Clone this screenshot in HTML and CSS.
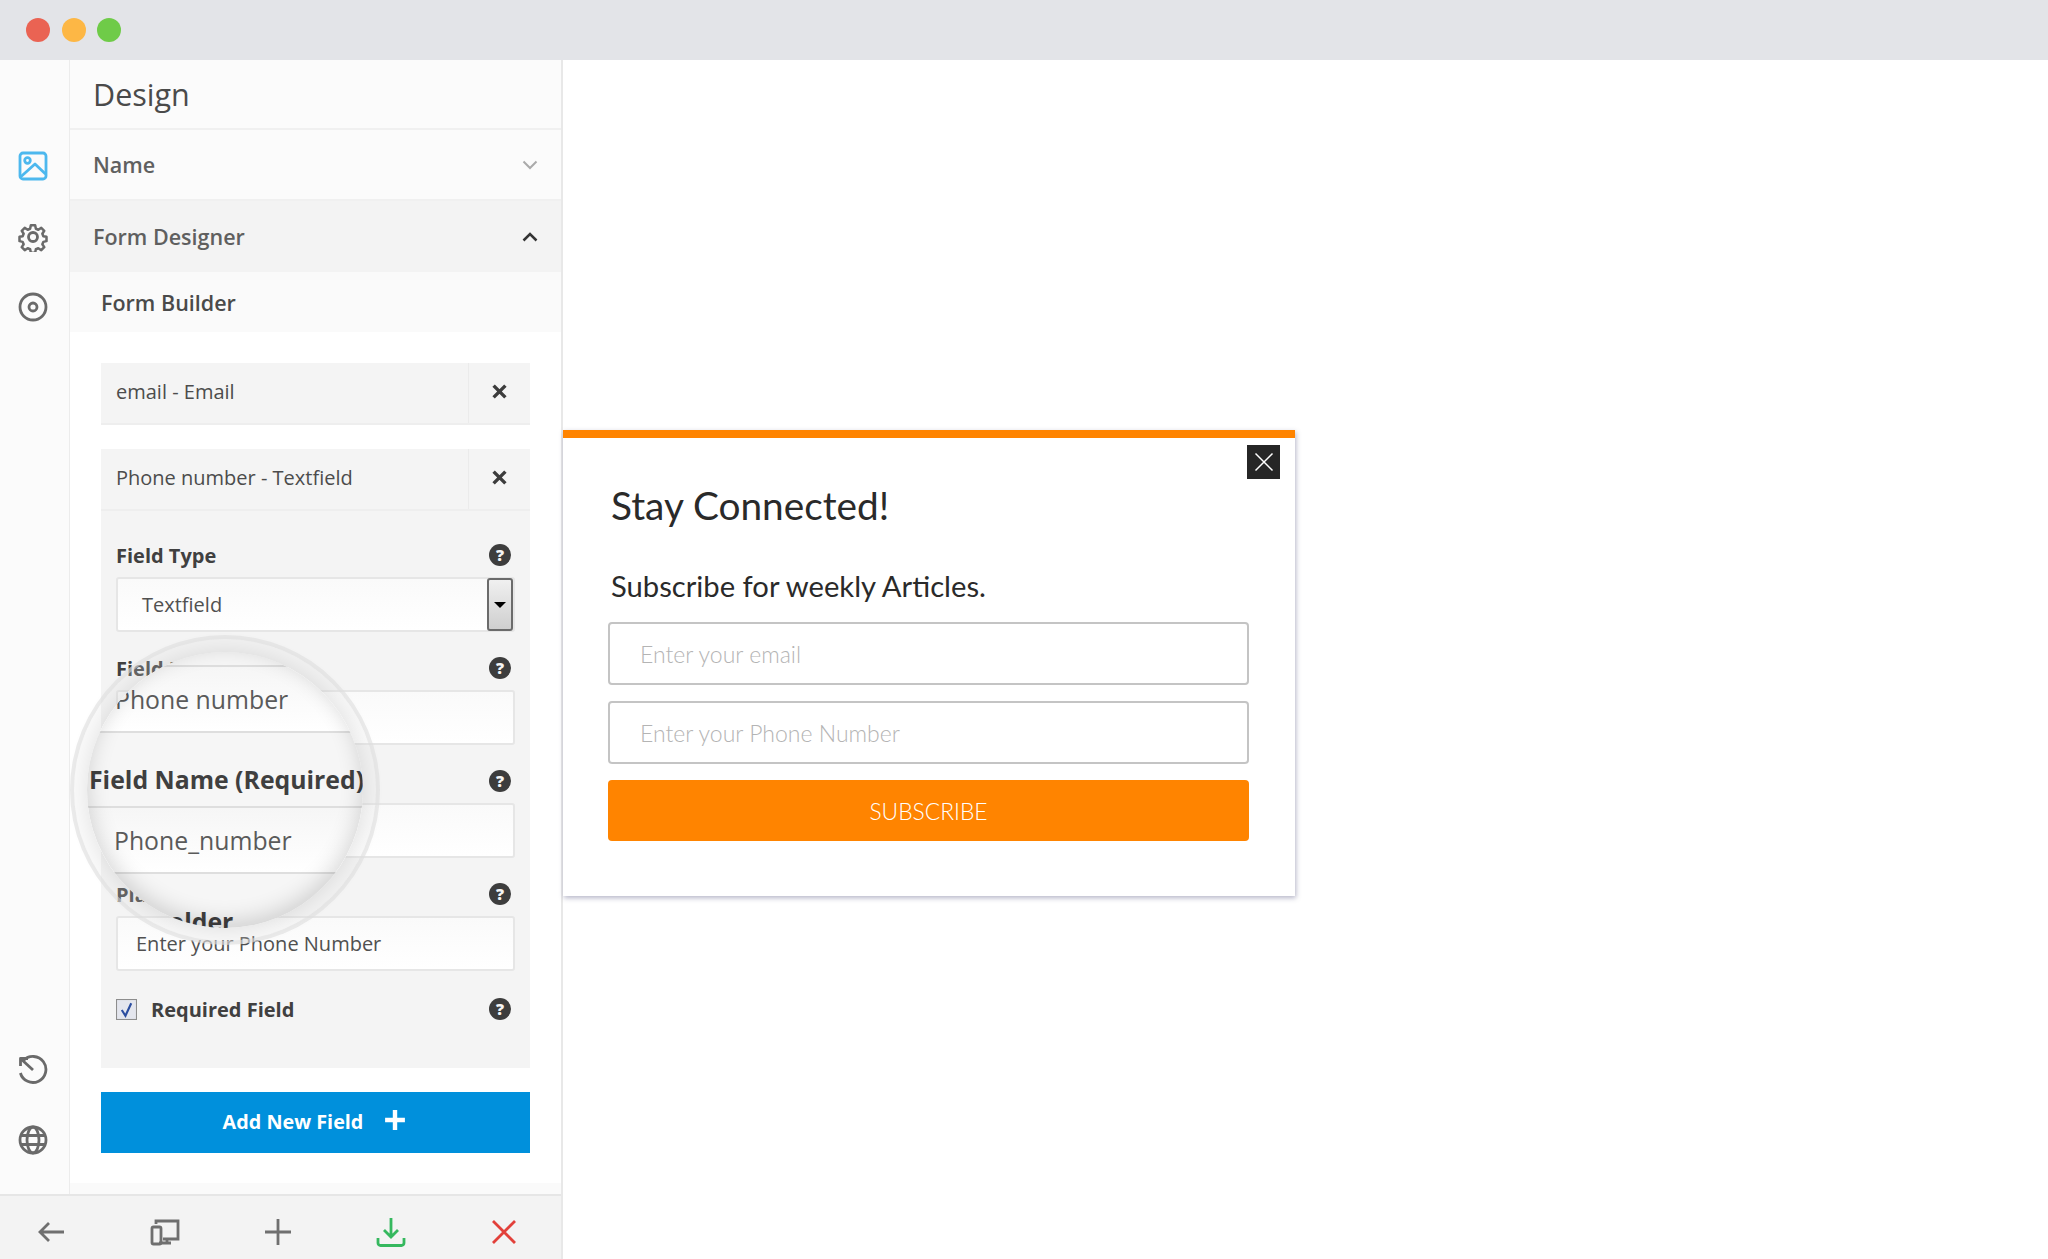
FILE: index.html
```html
<!DOCTYPE html>
<html lang="en">
<head>
<meta charset="utf-8">
<title>Form Designer</title>
<link rel="stylesheet" href="styles.css">
</head>
<body>
<header class="titlebar">
  <span class="dot dot-red"></span>
  <span class="dot dot-yellow"></span>
  <span class="dot dot-green"></span>
</header>
<div class="workspace">
  <aside class="sidebar">
    <div class="sidebar-body">
      <nav class="rail">
        <div class="rail-group">
          <svg class="rail-icon icon-active" viewBox="0 0 30 30"><rect x="2" y="2" width="26" height="26" rx="3"/><circle cx="9.5" cy="9.5" r="2.8"/><path d="M2.5 26 17 13l10.5 10"/></svg>
          <svg class="rail-icon" viewBox="0 0 30 30"><path d="M12.6 2h4.8l.8 3.8 2.7 1.1 3.3-2.1 3.3 3.3-2.1 3.3 1.1 2.7 3.5.7v4.8l-3.5.8-1.1 2.7 2.1 3.2-3.3 3.4-3.3-2.2-2.7 1.1-.8 3.8h-4.8l-.8-3.8-2.7-1.1-3.3 2.2-3.3-3.4 2.1-3.2-1.1-2.7-3.5-.8v-4.8l3.5-.7 1.1-2.7-2.1-3.3 3.3-3.3 3.3 2.1 2.7-1.1z" transform="translate(1.5 1.5) scale(.9)"/><circle cx="15" cy="15" r="4.5"/></svg>
          <svg class="rail-icon" viewBox="0 0 30 30"><circle cx="15" cy="15" r="13"/><circle cx="15" cy="15" r="4"/></svg>
        </div>
        <div class="rail-group">
          <svg class="rail-icon" viewBox="0 0 30 30"><path d="M5.5 5.5A13 13 0 1 1 2.4 18"/><path d="M2.5 11V3.5h7.5"/><path d="M3 4l12 11"/></svg>
          <svg class="rail-icon" viewBox="0 0 30 30"><circle cx="15" cy="15" r="13"/><ellipse cx="15" cy="15" rx="6" ry="13"/><path d="M3 10.500h24M3 19.500h24"/></svg>
        </div>
      </nav>
      <main class="panel">
        <h1 class="panel-title">Design</h1>
        <div class="acc-row">
          <span>Name</span>
          <svg class="chevron chevron-muted" viewBox="0 0 16 10"><path d="M1.500 1.500 8 8l6.500-6.500"/></svg>
        </div>
        <div class="acc-row acc-open">
          <span>Form Designer</span>
          <svg class="chevron" viewBox="0 0 16 10"><path d="M1.500 8.500 8 2l6.500 6.500"/></svg>
        </div>
        <div class="builder-head">Form Builder</div>
        <section class="builder">
          <div class="item">
            <div class="item-head">
              <span class="item-name">email - Email</span>
              <span class="item-x"><svg viewBox="0 0 14 14"><path d="M1.500 1.500l11 11M12.500 1.500l-11 11"/></svg></span>
            </div>
          </div>
          <div class="item">
            <div class="item-head">
              <span class="item-name">Phone number - Textfield</span>
              <span class="item-x"><svg viewBox="0 0 14 14"><path d="M1.500 1.500l11 11M12.500 1.500l-11 11"/></svg></span>
            </div>
            <div class="item-body">
              <div class="label-row label-first"><span>Field Type</span><span class="help">?</span></div>
              <div class="field select"><span>Textfield</span><span class="select-btn"><i class="caret"></i></span></div>
              <div class="label-row"><span>Field Label</span><span class="help">?</span></div>
              <div class="field">Phone number</div>
              <div class="label-row"><span>Field Name (Required)</span><span class="help">?</span></div>
              <div class="field">Phone_number</div>
              <div class="label-row"><span>Placeholder</span><span class="help">?</span></div>
              <div class="field">Enter your Phone Number</div>
              <div class="label-row check-row">
                <span class="check-wrap"><svg class="checkbox" viewBox="0 0 20 20"><rect x=".5" y=".5" width="19" height="19" fill="#e4e6ee" stroke="#8d8d8d"/><path d="M5.500 10.500 9 16l5.500-12" fill="none" stroke="#2b4da0" stroke-width="2"/></svg>Required Field</span>
                <span class="help">?</span>
              </div>
            </div>
          </div>
          <div class="add-btn"><span>Add New Field</span><svg class="add-plus" viewBox="0 0 20 20"><path d="M10 1v18M1 10h18"/></svg></div>
        </section>
      </main>
    </div>
    <footer class="toolbar">
      <svg class="tool" viewBox="0 0 30 30"><path d="M27 15H4M12 6l-9 9 9 9"/></svg>
      <svg class="tool" viewBox="0 0 30 30"><path d="M6 7V4h22v18H13M9 26h12M17 22v4"/><rect x="2" y="10" width="9" height="17" rx="1.500"/></svg>
      <svg class="tool" viewBox="0 0 30 30"><path d="M15 2v26M2 15h26"/></svg>
      <svg class="tool tool-green" viewBox="0 0 30 30"><path d="M15 1v19M8 13l7 7 7-7M2 21v5a2.500 2.500 0 0 0 2.500 2.500h21A2.500 2.500 0 0 0 28 26v-5"/></svg>
      <svg class="tool tool-red" viewBox="0 0 30 30"><path d="M4 4l22 22M26 4 4 26"/></svg>
    </footer>
    <div class="magnifier">
      <div class="lens">
        <div class="lens-field lens-field-a">Phone number</div>
        <div class="lens-label lens-label-name">Field Name (Required)</div>
        <div class="lens-field lens-field-b">Phone_number</div>
        <div class="lens-label lens-label-place">Placeholder</div>
      </div>
    </div>
  </aside>
  <section class="stage">
    <div class="popup">
      <span class="popup-close"><svg viewBox="0 0 20 20"><path d="M1.500 1.500l17 17M18.500 1.500l-17 17"/></svg></span>
      <h2 class="popup-title">Stay Connected!</h2>
      <p class="popup-sub">Subscribe for weekly Articles.</p>
      <div class="popup-input">Enter your email</div>
      <div class="popup-input">Enter your Phone Number</div>
      <div class="popup-btn">SUBSCRIBE</div>
    </div>
  </section>
</div>
</body>
</html>
```
FILE: styles.css
```css
* { box-sizing: border-box; }
html, body { margin: 0; height: 100%; }
body {
  display: flex;
  flex-direction: column;
  width: 2048px;
  height: 1259px;
  overflow: hidden;
  background: #fff;
  font-family: "Open Sans", "Liberation Sans", sans-serif;
  color: #444;
}

/* Window chrome */
.titlebar {
  flex: 0 0 60px;
  display: flex;
  align-items: center;
  gap: 11.500px;
  padding: 0 0 0 26px;
  background: #e3e4e8;
}
.dot { width: 24px; height: 24px; border-radius: 50%; }
.dot-red { background: #ea6353; }
.dot-yellow { background: #fdb745; }
.dot-green { background: #6fcb48; }

.workspace { flex: 1; display: flex; min-height: 0; }

/* Sidebar */
.sidebar {
  position: relative;
  flex: 0 0 563px;
  display: flex;
  flex-direction: column;
  border-right: 2px solid #e8e8e8;
}
.sidebar-body { flex: 1; display: flex; min-height: 0; }
.rail {
  flex: 0 0 70px;
  display: flex;
  flex-direction: column;
  justify-content: space-between;
  padding: 91px 4px 39px 0;
  background: #fbfbfb;
  border-right: 1px solid #ececec;
}
.rail-group { display: flex; flex-direction: column; align-items: center; gap: 40.500px; }
.rail-icon {
  width: 30px;
  height: 30px;
  fill: none;
  stroke: #6a6a6a;
  stroke-width: 2.800;
  stroke-linejoin: round;
}
.icon-active { stroke: #4db8ee; }

.panel {
  flex: 1;
  display: flex;
  flex-direction: column;
  min-width: 0;
  padding-bottom: 11px;
  background: #fafafa;
}
.panel-title {
  flex: 0 0 70px;
  display: flex;
  align-items: center;
  margin: 0;
  padding: 0 0 0 23px;
  font-size: 30.500px;
  font-weight: 400;
  color: #4a4a4a;
  background: #fbfbfb;
  border-bottom: 2px solid #f0f0f0;
}
.acc-row {
  flex: 0 0 71px;
  display: flex;
  align-items: center;
  justify-content: space-between;
  padding: 0 23px;
  font-size: 21.500px;
  font-weight: 600;
  color: #606060;
  background: #fbfbfb;
  border-bottom: 2px solid #f0f0f0;
}
.acc-open { background: #f3f3f3; border-bottom: 0; color: #5f5f5f; }
.chevron { width: 16px; height: 10px; fill: none; stroke: #333; stroke-width: 2.500; }
.chevron-muted { stroke: #aaa; stroke-width: 2; }
.builder-head {
  flex: 0 0 60px;
  display: flex;
  align-items: center;
  padding-left: 31px;
  font-size: 21.500px;
  font-weight: 600;
  color: #4a4a4a;
  background: #fafafa;
}
.builder {
  flex: 1;
  display: flex;
  flex-direction: column;
  gap: 24px;
  padding: 31px 31px 30px;
  background: #fff;
}
.item { background: #f4f4f4; }
.item-head {
  display: flex;
  height: 62px;
  border-bottom: 2px solid #eeeeee;
}
.item-name {
  flex: 1;
  display: flex;
  align-items: center;
  padding: 0 0 3px 15px;
  font-size: 20px;
  color: #4c4c4c;
  border-right: 1px solid #ebebeb;
}
.item-x {
  flex: 0 0 61px;
  display: flex;
  align-items: center;
  justify-content: center;
  padding-bottom: 3px;
}
.item-x svg { width: 15px; height: 15px; fill: none; stroke: #3c3c3c; stroke-width: 3.200; }
.item-body { padding: 0 15px 43px; }
.label-row {
  display: flex;
  align-items: center;
  justify-content: space-between;
  height: 32px;
  margin-top: 20px;
  padding-right: 4px;
  font-size: 20px;
  font-weight: 700;
  color: #404040;
}
.label-first { margin-top: 28px; }
.help {
  display: flex;
  align-items: center;
  justify-content: center;
  width: 22px;
  height: 22px;
  border-radius: 50%;
  background: #3d3d3d;
  color: #f4f4f4;
  font-size: 16px;
  font-weight: 800;
  line-height: 1;
}
.field {
  display: flex;
  align-items: center;
  height: 55px;
  margin-top: 6px;
  padding-left: 18px;
  font-size: 20px;
  color: #505050;
  background: linear-gradient(#fafafa, #fff);
  border: 2px solid #e6e6e6;
  border-radius: 3px;
}
.select { padding-left: 24px; padding-right: 0; justify-content: space-between; }
.select-btn {
  display: flex;
  align-items: center;
  justify-content: center;
  width: 26px;
  height: 53px;
  background: linear-gradient(#f0f0f0, #cfcfcf);
  border: 2px solid #6b6b6b;
  border-radius: 3px;
}
.caret {
  border-style: solid;
  border-width: 6px 6px 0;
  border-color: #000 transparent transparent;
}
.check-row { margin-top: 22px; }
.check-wrap { display: flex; align-items: center; gap: 14px; }
.checkbox { width: 21px; height: 21px; }
.add-btn {
  display: flex;
  align-items: center;
  justify-content: center;
  gap: 21px;
  flex: 0 0 61px;
  padding: 0 2px 2px 0;
  font-size: 19.800px;
  font-weight: 700;
  color: #fff;
  background: #0090dc;
}
.add-plus { width: 22px; height: 22px; fill: none; stroke: #fff; stroke-width: 4; margin-top: -3px; }

/* Bottom toolbar */
.toolbar {
  flex: 0 0 65px;
  display: flex;
  align-items: center;
  justify-content: space-between;
  padding: 8px 42px 0 37px;
  background: #f3f3f3;
  border-top: 2px solid #e6e6e6;
}
.tool { width: 30px; height: 30px; fill: none; stroke: #6f6f6f; stroke-width: 2.800; }
.tool-green { stroke: #35b85e; }
.tool-red { stroke: #e2403a; }

/* Magnifying glass over the form */
.magnifier {
  position: absolute;
  left: 70px;
  top: 575px;
  width: 310px;
  height: 310px;
  padding: 13px;
  border-radius: 50%;
  background: rgba(232, 232, 232, .22);
  border: 4px solid rgba(222, 222, 222, .55);
}
.lens {
  position: relative;
  width: 276px;
  height: 276px;
  overflow: hidden;
  border-radius: 50%;
  background: #f6f6f6;
  box-shadow: 0 0 22px rgba(0, 0, 0, .1);
}
.lens::after {
  content: "";
  position: absolute;
  inset: 0;
  border-radius: 50%;
  box-shadow: inset 0 -6px 22px rgba(0, 0, 0, .16);
}
.lens-field, .lens-label { position: absolute; white-space: nowrap; }
.lens-field {
  left: -4px;
  width: 292px;
  height: 68px;
  padding-left: 30px;
  font-size: 24.800px;
  color: #5a5a5a;
  background: linear-gradient(#f6f6f6, #fff);
  border: 2px solid #dedede;
}
.lens-field-a { top: 13px; line-height: 64px; }
.lens-field-b { top: 154px; padding-left: 29px; line-height: 64px; }
.lens-label { font-size: 24.800px; font-weight: 700; color: #3f3f3f; line-height: 34px; }
.lens-label-name { left: 2px; top: 110px; }
.lens-label-place { left: 0; top: 252px; }

/* Popup preview */
.stage { flex: 1; min-width: 0; padding: 370px 0 0 0; }
.popup {
  position: relative;
  width: 732px;
  height: 466px;
  padding: 44px 46px 0 45px;
  background: #fff;
  border-top: 8px solid #ff8400;
  box-shadow: 1px 2px 5px rgba(90, 90, 130, .45);
  font-family: "Lato", "Open Sans", sans-serif;
  color: #2a2a2a;
}
.popup-close {
  position: absolute;
  top: 7px;
  right: 15px;
  display: flex;
  align-items: center;
  justify-content: center;
  width: 33px;
  height: 34px;
  background: #262626;
}
.popup-close svg { width: 20px; height: 20px; fill: none; stroke: #fff; stroke-width: 1.500; }
.popup-title { margin: 0 0 0 3px; font-size: 38.800px; line-height: 46px; font-weight: 400; }
.popup-sub { margin: 40px 0 18px 3px; font-size: 29.200px; line-height: 36px; font-weight: 400; }
.popup-input {
  display: flex;
  align-items: center;
  height: 63px;
  margin-bottom: 16px;
  padding-left: 30px;
  font-size: 23px;
  font-weight: 300;
  color: #b4b4b4;
  border: 2px solid #c4c4c4;
  border-radius: 4px;
}
.popup-btn {
  display: flex;
  align-items: center;
  justify-content: center;
  height: 61px;
  margin-top: 2px;
  font-size: 22.800px;
  font-weight: 300;
  color: #fff;
  background: #ff8400;
  border-radius: 4px;
}
```
